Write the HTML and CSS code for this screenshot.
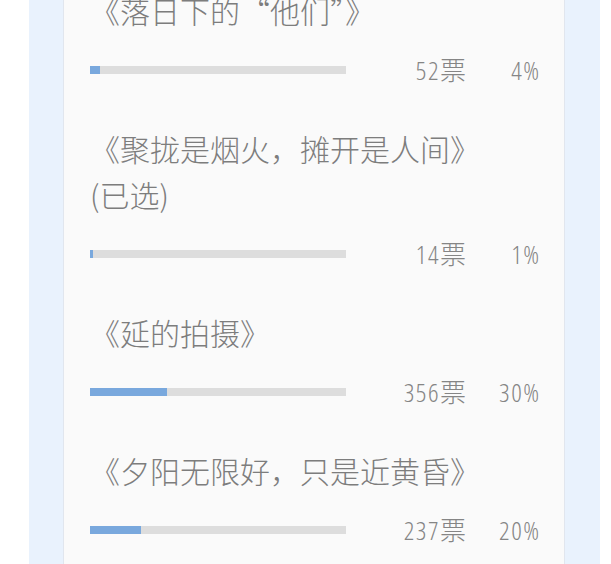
FILE: index.html
```html
<!DOCTYPE html>
<html lang="zh-CN">

<head>
    <meta charset="UTF-8">
    <meta name="viewport" content="width=device-width, initial-scale=1.0">
    <title>投票结果</title>
    <link rel="stylesheet" href="styles.css">
</head>

<body>
    <div class="page">
        <div class="card">
            <ul class="vote-list">
                <li class="vote-item">
                    <div class="vote-title">《落日下的“他们”》</div>
                    <div class="vote-row">
                        <div class="bar"><div class="bar-fill" style="width: 4%"></div></div>
                        <span class="vote-num">52票</span>
                        <span class="vote-pct">4%</span>
                    </div>
                </li>
                <li class="vote-item">
                    <div class="vote-title">《聚拢是烟火，摊开是人间》<span class="chosen">(已选)</span></div>
                    <div class="vote-row">
                        <div class="bar"><div class="bar-fill" style="width: 1%"></div></div>
                        <span class="vote-num">14票</span>
                        <span class="vote-pct">1%</span>
                    </div>
                </li>
                <li class="vote-item">
                    <div class="vote-title">《延的拍摄》</div>
                    <div class="vote-row">
                        <div class="bar"><div class="bar-fill" style="width: 30%"></div></div>
                        <span class="vote-num">356票</span>
                        <span class="vote-pct">30%</span>
                    </div>
                </li>
                <li class="vote-item">
                    <div class="vote-title">《夕阳无限好，只是近黄昏》</div>
                    <div class="vote-row">
                        <div class="bar"><div class="bar-fill" style="width: 20%"></div></div>
                        <span class="vote-num">237票</span>
                        <span class="vote-pct">20%</span>
                    </div>
                </li>
            </ul>
        </div>
    </div>
</body>

</html>
```

FILE: styles.css
```css
* {
    margin: 0;
    padding: 0;
}

html,
body {
    height: 100%;
    overflow: hidden;
}

body {
    background-color: #fff;
    font-family: "Noto Sans CJK SC", sans-serif;
}

ul {
    list-style: none;
}

.page {
    display: flow-root;
    height: 100%;
    margin: 0 11px 0 29px;
    padding: 0 35px 0 34px;
    background-color: #e9f2fd;
}

.card {
    display: flow-root;
    height: 100%;
    padding: 0 25px 0 26px;
    background-color: #fafafa;
    border-left: 1px solid #e1e6ee;
    border-right: 1px solid #e1e6ee;
}

/* 页面已向下滚动，第一项标题只露出下半 */
.vote-list {
    margin-top: -13px;
}

.vote-item {
    padding-bottom: 40px;
}

.vote-title {
    font-size: 30px;
    font-weight: 300;
    line-height: 46px;
    color: #7d7d7d;
}

.chosen {
    white-space: nowrap;
}

.vote-row {
    display: grid;
    grid-template-columns: 256px 1fr 73px;
    align-items: center;
    height: 30px;
    margin-top: 22px;
    font-family: "Open Sans", "Noto Sans CJK SC", sans-serif;
    font-size: 26px;
    font-weight: 300;
    font-stretch: 75%;
    letter-spacing: 1.5px;
    line-height: 30px;
    color: #858585;
}

.bar {
    height: 8px;
    background-color: #dddddd;
}

.bar-fill {
    height: 100%;
    background-color: #79a8dd;
}

.vote-num,
.vote-pct {
    margin-right: -1.5px;
    text-align: right;
}
```
